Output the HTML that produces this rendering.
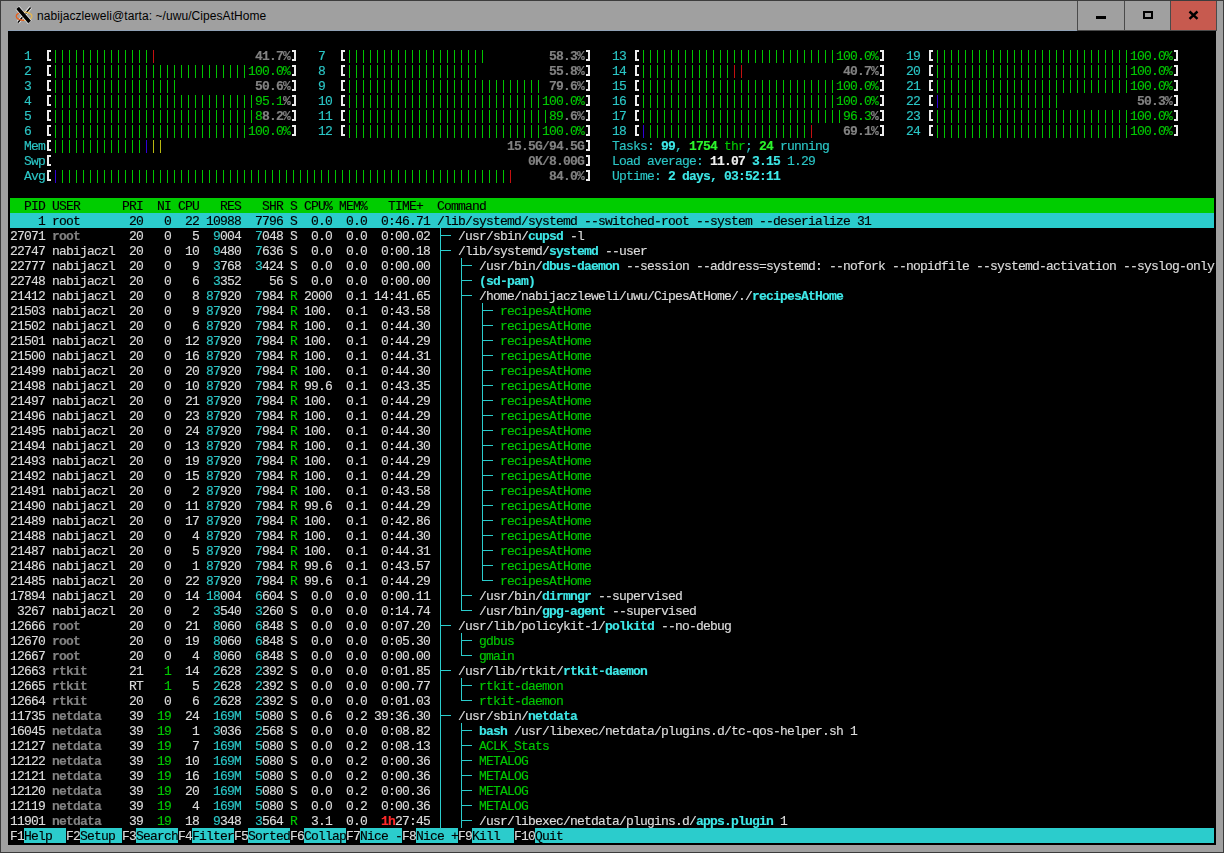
<!DOCTYPE html><html><head><meta charset="utf-8"><style>
html,body{margin:0;padding:0;width:1224px;height:853px;overflow:hidden;background:#a0a0a0;}
#frame{position:absolute;left:0;top:0;width:1222px;height:851px;border:1px solid #3c3c3c;background:#a0a0a0;}
#title{position:absolute;left:37px;top:8px;font-family:"Liberation Sans",sans-serif;font-size:12px;letter-spacing:0.07px;color:#000;white-space:pre;line-height:16px;}
#term{position:absolute;left:8px;top:31px;width:1208px;height:814px;background:#000;}
#tline{position:absolute;left:8px;top:30px;width:1069px;height:1px;background:#8fa0b4;}
.btn{position:absolute;top:1px;height:29px;background:#a0a0a0;}
.t{position:absolute;font-family:"Liberation Mono",monospace;font-size:13px;letter-spacing:-0.80126953125px;-webkit-text-stroke:0.15px currentColor;white-space:pre;line-height:15px;height:15px;}
.bg{position:absolute;height:15px;}
.ln{position:absolute;background:#2bcccc;}
.bar{position:absolute;height:13px;background:repeating-linear-gradient(90deg,transparent 0,transparent 3px,currentColor 3px,currentColor 4px,transparent 4px,transparent 7px);}
</style></head><body><div id="frame"></div>

<div id="tline"></div><div id="term"></div>
<div style="position:absolute;left:1077px;top:30px;width:139px;height:1px;background:#4a4a4a"></div>
<div style="position:absolute;left:1077px;top:1px;width:1px;height:30px;background:#4a4a4a"></div>
<div style="position:absolute;left:1124px;top:1px;width:1px;height:30px;background:#4a4a4a"></div>
<div style="position:absolute;left:1170px;top:1px;width:1px;height:30px;background:#4a4a4a"></div>
<div style="position:absolute;left:1216px;top:1px;width:1px;height:30px;background:#4a4a4a"></div>
<div style="position:absolute;left:1171px;top:1px;width:45px;height:29px;background:#c75a4f"></div>
<div style="position:absolute;left:1096px;top:16px;width:10px;height:3px;background:#000"></div>
<div style="position:absolute;left:1143px;top:11px;width:6px;height:4px;border:2px solid #000"></div>
<svg style="position:absolute;left:1187px;top:9px" width="13" height="12" viewBox="0 0 13 12"><path d="M2.5 2.5 L10.5 9.8 M10.5 2.5 L2.5 9.8" stroke="#000" stroke-width="2.4"/></svg>
<svg style="position:absolute;left:12px;top:4px" width="24" height="24" viewBox="0 0 24 24">

<path d="M18.6 3.4 L6 18.4" stroke="#fff" stroke-width="3.2" stroke-opacity="0.85"/>
<path d="M18.6 3.4 L6 18.4" stroke="#000" stroke-width="1.5"/>
<path d="M12.1 8.2 A7.9 4.1 0 0 0 12.1 16.4" fill="none" stroke="#e8601e" stroke-width="1.3"/><path d="M12.1 16.4 A7.9 4.1 0 0 0 12.1 8.2" fill="none" stroke="#e8b84e" stroke-width="1.2"/>
<path d="M5.4 3.6 L17.8 18.2" stroke="#fff" stroke-width="5.2" stroke-opacity="0.7"/>
<path d="M5.6 3.8 L17.6 18.0" stroke="#000" stroke-width="3.6"/>
</svg>
<div id="title">nabijaczleweli@tarta: ~/uwu/CipesAtHome</div>
<div class="bg" style="left:10px;top:198px;width:1204px;background:#00cd00"></div>
<div class="bg" style="left:10px;top:213px;width:1204px;background:#2bcccc"></div>
<div class="bg" style="left:535px;top:828px;width:679px;background:#2bcccc"></div>
<div class="bg" style="left:24px;top:828px;width:42px;background:#2bcccc"></div>
<div class="bg" style="left:80px;top:828px;width:42px;background:#2bcccc"></div>
<div class="bg" style="left:136px;top:828px;width:42px;background:#2bcccc"></div>
<div class="bg" style="left:192px;top:828px;width:42px;background:#2bcccc"></div>
<div class="bg" style="left:248px;top:828px;width:42px;background:#2bcccc"></div>
<div class="bg" style="left:304px;top:828px;width:42px;background:#2bcccc"></div>
<div class="bg" style="left:360px;top:828px;width:42px;background:#2bcccc"></div>
<div class="bg" style="left:416px;top:828px;width:42px;background:#2bcccc"></div>
<div class="bg" style="left:472px;top:828px;width:42px;background:#2bcccc"></div>
<div style="position:absolute;left:47px;top:50px;width:2px;height:7px;border:2px solid #ececec;border-right:0"></div>
<div style="position:absolute;left:292px;top:50px;width:2px;height:7px;border:2px solid #ececec;border-left:0"></div>
<div style="position:absolute;left:47px;top:65px;width:2px;height:7px;border:2px solid #ececec;border-right:0"></div>
<div style="position:absolute;left:292px;top:65px;width:2px;height:7px;border:2px solid #ececec;border-left:0"></div>
<div style="position:absolute;left:47px;top:80px;width:2px;height:7px;border:2px solid #ececec;border-right:0"></div>
<div style="position:absolute;left:292px;top:80px;width:2px;height:7px;border:2px solid #ececec;border-left:0"></div>
<div style="position:absolute;left:47px;top:95px;width:2px;height:7px;border:2px solid #ececec;border-right:0"></div>
<div style="position:absolute;left:292px;top:95px;width:2px;height:7px;border:2px solid #ececec;border-left:0"></div>
<div style="position:absolute;left:47px;top:110px;width:2px;height:7px;border:2px solid #ececec;border-right:0"></div>
<div style="position:absolute;left:292px;top:110px;width:2px;height:7px;border:2px solid #ececec;border-left:0"></div>
<div style="position:absolute;left:47px;top:125px;width:2px;height:7px;border:2px solid #ececec;border-right:0"></div>
<div style="position:absolute;left:292px;top:125px;width:2px;height:7px;border:2px solid #ececec;border-left:0"></div>
<div style="position:absolute;left:341px;top:50px;width:2px;height:7px;border:2px solid #ececec;border-right:0"></div>
<div style="position:absolute;left:586px;top:50px;width:2px;height:7px;border:2px solid #ececec;border-left:0"></div>
<div style="position:absolute;left:341px;top:65px;width:2px;height:7px;border:2px solid #ececec;border-right:0"></div>
<div style="position:absolute;left:586px;top:65px;width:2px;height:7px;border:2px solid #ececec;border-left:0"></div>
<div style="position:absolute;left:341px;top:80px;width:2px;height:7px;border:2px solid #ececec;border-right:0"></div>
<div style="position:absolute;left:586px;top:80px;width:2px;height:7px;border:2px solid #ececec;border-left:0"></div>
<div style="position:absolute;left:341px;top:95px;width:2px;height:7px;border:2px solid #ececec;border-right:0"></div>
<div style="position:absolute;left:586px;top:95px;width:2px;height:7px;border:2px solid #ececec;border-left:0"></div>
<div style="position:absolute;left:341px;top:110px;width:2px;height:7px;border:2px solid #ececec;border-right:0"></div>
<div style="position:absolute;left:586px;top:110px;width:2px;height:7px;border:2px solid #ececec;border-left:0"></div>
<div style="position:absolute;left:341px;top:125px;width:2px;height:7px;border:2px solid #ececec;border-right:0"></div>
<div style="position:absolute;left:586px;top:125px;width:2px;height:7px;border:2px solid #ececec;border-left:0"></div>
<div style="position:absolute;left:635px;top:50px;width:2px;height:7px;border:2px solid #ececec;border-right:0"></div>
<div style="position:absolute;left:880px;top:50px;width:2px;height:7px;border:2px solid #ececec;border-left:0"></div>
<div style="position:absolute;left:635px;top:65px;width:2px;height:7px;border:2px solid #ececec;border-right:0"></div>
<div style="position:absolute;left:880px;top:65px;width:2px;height:7px;border:2px solid #ececec;border-left:0"></div>
<div style="position:absolute;left:635px;top:80px;width:2px;height:7px;border:2px solid #ececec;border-right:0"></div>
<div style="position:absolute;left:880px;top:80px;width:2px;height:7px;border:2px solid #ececec;border-left:0"></div>
<div style="position:absolute;left:635px;top:95px;width:2px;height:7px;border:2px solid #ececec;border-right:0"></div>
<div style="position:absolute;left:880px;top:95px;width:2px;height:7px;border:2px solid #ececec;border-left:0"></div>
<div style="position:absolute;left:635px;top:110px;width:2px;height:7px;border:2px solid #ececec;border-right:0"></div>
<div style="position:absolute;left:880px;top:110px;width:2px;height:7px;border:2px solid #ececec;border-left:0"></div>
<div style="position:absolute;left:635px;top:125px;width:2px;height:7px;border:2px solid #ececec;border-right:0"></div>
<div style="position:absolute;left:880px;top:125px;width:2px;height:7px;border:2px solid #ececec;border-left:0"></div>
<div style="position:absolute;left:929px;top:50px;width:2px;height:7px;border:2px solid #ececec;border-right:0"></div>
<div style="position:absolute;left:1174px;top:50px;width:2px;height:7px;border:2px solid #ececec;border-left:0"></div>
<div style="position:absolute;left:929px;top:65px;width:2px;height:7px;border:2px solid #ececec;border-right:0"></div>
<div style="position:absolute;left:1174px;top:65px;width:2px;height:7px;border:2px solid #ececec;border-left:0"></div>
<div style="position:absolute;left:929px;top:80px;width:2px;height:7px;border:2px solid #ececec;border-right:0"></div>
<div style="position:absolute;left:1174px;top:80px;width:2px;height:7px;border:2px solid #ececec;border-left:0"></div>
<div style="position:absolute;left:929px;top:95px;width:2px;height:7px;border:2px solid #ececec;border-right:0"></div>
<div style="position:absolute;left:1174px;top:95px;width:2px;height:7px;border:2px solid #ececec;border-left:0"></div>
<div style="position:absolute;left:929px;top:110px;width:2px;height:7px;border:2px solid #ececec;border-right:0"></div>
<div style="position:absolute;left:1174px;top:110px;width:2px;height:7px;border:2px solid #ececec;border-left:0"></div>
<div style="position:absolute;left:929px;top:125px;width:2px;height:7px;border:2px solid #ececec;border-right:0"></div>
<div style="position:absolute;left:1174px;top:125px;width:2px;height:7px;border:2px solid #ececec;border-left:0"></div>
<div style="position:absolute;left:47px;top:140px;width:2px;height:7px;border:2px solid #ececec;border-right:0"></div>
<div style="position:absolute;left:586px;top:140px;width:2px;height:7px;border:2px solid #ececec;border-left:0"></div>
<div style="position:absolute;left:47px;top:155px;width:2px;height:7px;border:2px solid #ececec;border-right:0"></div>
<div style="position:absolute;left:586px;top:155px;width:2px;height:7px;border:2px solid #ececec;border-left:0"></div>
<div style="position:absolute;left:47px;top:170px;width:2px;height:7px;border:2px solid #ececec;border-right:0"></div>
<div style="position:absolute;left:586px;top:170px;width:2px;height:7px;border:2px solid #ececec;border-left:0"></div>
<div class="bar" style="left:52px;top:50px;width:98px;color:#00c400"></div>
<div class="bar" style="left:150px;top:50px;width:7px;color:#c41010"></div>
<div class="bar" style="left:346px;top:50px;width:140px;color:#00c400"></div>
<div class="bar" style="left:640px;top:50px;width:196px;color:#00c400"></div>
<div class="bar" style="left:934px;top:50px;width:196px;color:#00c400"></div>
<div class="bar" style="left:52px;top:65px;width:196px;color:#00c400"></div>
<div class="bar" style="left:346px;top:65px;width:133px;color:#00c400"></div>
<div class="bar" style="left:640px;top:65px;width:91px;color:#00c400"></div>
<div class="bar" style="left:731px;top:65px;width:14px;color:#c41010"></div>
<div class="bar" style="left:934px;top:65px;width:196px;color:#00c400"></div>
<div class="bar" style="left:52px;top:80px;width:126px;color:#00c400"></div>
<div class="bar" style="left:346px;top:80px;width:196px;color:#00c400"></div>
<div class="bar" style="left:640px;top:80px;width:196px;color:#00c400"></div>
<div class="bar" style="left:934px;top:80px;width:196px;color:#00c400"></div>
<div class="bar" style="left:52px;top:95px;width:203px;color:#00c400"></div>
<div class="bar" style="left:346px;top:95px;width:196px;color:#00c400"></div>
<div class="bar" style="left:640px;top:95px;width:196px;color:#00c400"></div>
<div class="bar" style="left:934px;top:95px;width:7px;color:#3000d8"></div>
<div class="bar" style="left:941px;top:95px;width:119px;color:#00c400"></div>
<div class="bar" style="left:52px;top:110px;width:203px;color:#00c400"></div>
<div class="bar" style="left:346px;top:110px;width:203px;color:#00c400"></div>
<div class="bar" style="left:640px;top:110px;width:203px;color:#00c400"></div>
<div class="bar" style="left:934px;top:110px;width:196px;color:#00c400"></div>
<div class="bar" style="left:52px;top:125px;width:196px;color:#00c400"></div>
<div class="bar" style="left:346px;top:125px;width:196px;color:#00c400"></div>
<div class="bar" style="left:640px;top:125px;width:7px;color:#3000d8"></div>
<div class="bar" style="left:647px;top:125px;width:161px;color:#00c400"></div>
<div class="bar" style="left:808px;top:125px;width:7px;color:#c41010"></div>
<div class="bar" style="left:934px;top:125px;width:196px;color:#00c400"></div>
<div class="bar" style="left:52px;top:140px;width:91px;color:#00c400"></div>
<div class="bar" style="left:143px;top:140px;width:7px;color:#3000d8"></div>
<div class="bar" style="left:150px;top:140px;width:14px;color:#b8b810"></div>
<div class="bar" style="left:52px;top:170px;width:7px;color:#3000d8"></div>
<div class="bar" style="left:59px;top:170px;width:448px;color:#00c400"></div>
<div class="bar" style="left:507px;top:170px;width:7px;color:#c41010"></div>
<div class="ln" style="left:440px;top:228px;width:1px;height:15px"></div>
<div class="ln" style="left:440px;top:235px;width:11px;height:1px"></div>
<div class="ln" style="left:440px;top:243px;width:1px;height:15px"></div>
<div class="ln" style="left:440px;top:250px;width:11px;height:1px"></div>
<div class="ln" style="left:440px;top:258px;width:1px;height:15px"></div>
<div class="ln" style="left:461px;top:258px;width:1px;height:15px"></div>
<div class="ln" style="left:461px;top:265px;width:11px;height:1px"></div>
<div class="ln" style="left:440px;top:273px;width:1px;height:15px"></div>
<div class="ln" style="left:461px;top:273px;width:1px;height:15px"></div>
<div class="ln" style="left:461px;top:280px;width:11px;height:1px"></div>
<div class="ln" style="left:440px;top:288px;width:1px;height:15px"></div>
<div class="ln" style="left:461px;top:288px;width:1px;height:15px"></div>
<div class="ln" style="left:461px;top:295px;width:11px;height:1px"></div>
<div class="ln" style="left:440px;top:303px;width:1px;height:15px"></div>
<div class="ln" style="left:461px;top:303px;width:1px;height:15px"></div>
<div class="ln" style="left:482px;top:303px;width:1px;height:15px"></div>
<div class="ln" style="left:482px;top:310px;width:11px;height:1px"></div>
<div class="ln" style="left:440px;top:318px;width:1px;height:15px"></div>
<div class="ln" style="left:461px;top:318px;width:1px;height:15px"></div>
<div class="ln" style="left:482px;top:318px;width:1px;height:15px"></div>
<div class="ln" style="left:482px;top:325px;width:11px;height:1px"></div>
<div class="ln" style="left:440px;top:333px;width:1px;height:15px"></div>
<div class="ln" style="left:461px;top:333px;width:1px;height:15px"></div>
<div class="ln" style="left:482px;top:333px;width:1px;height:15px"></div>
<div class="ln" style="left:482px;top:340px;width:11px;height:1px"></div>
<div class="ln" style="left:440px;top:348px;width:1px;height:15px"></div>
<div class="ln" style="left:461px;top:348px;width:1px;height:15px"></div>
<div class="ln" style="left:482px;top:348px;width:1px;height:15px"></div>
<div class="ln" style="left:482px;top:355px;width:11px;height:1px"></div>
<div class="ln" style="left:440px;top:363px;width:1px;height:15px"></div>
<div class="ln" style="left:461px;top:363px;width:1px;height:15px"></div>
<div class="ln" style="left:482px;top:363px;width:1px;height:15px"></div>
<div class="ln" style="left:482px;top:370px;width:11px;height:1px"></div>
<div class="ln" style="left:440px;top:378px;width:1px;height:15px"></div>
<div class="ln" style="left:461px;top:378px;width:1px;height:15px"></div>
<div class="ln" style="left:482px;top:378px;width:1px;height:15px"></div>
<div class="ln" style="left:482px;top:385px;width:11px;height:1px"></div>
<div class="ln" style="left:440px;top:393px;width:1px;height:15px"></div>
<div class="ln" style="left:461px;top:393px;width:1px;height:15px"></div>
<div class="ln" style="left:482px;top:393px;width:1px;height:15px"></div>
<div class="ln" style="left:482px;top:400px;width:11px;height:1px"></div>
<div class="ln" style="left:440px;top:408px;width:1px;height:15px"></div>
<div class="ln" style="left:461px;top:408px;width:1px;height:15px"></div>
<div class="ln" style="left:482px;top:408px;width:1px;height:15px"></div>
<div class="ln" style="left:482px;top:415px;width:11px;height:1px"></div>
<div class="ln" style="left:440px;top:423px;width:1px;height:15px"></div>
<div class="ln" style="left:461px;top:423px;width:1px;height:15px"></div>
<div class="ln" style="left:482px;top:423px;width:1px;height:15px"></div>
<div class="ln" style="left:482px;top:430px;width:11px;height:1px"></div>
<div class="ln" style="left:440px;top:438px;width:1px;height:15px"></div>
<div class="ln" style="left:461px;top:438px;width:1px;height:15px"></div>
<div class="ln" style="left:482px;top:438px;width:1px;height:15px"></div>
<div class="ln" style="left:482px;top:445px;width:11px;height:1px"></div>
<div class="ln" style="left:440px;top:453px;width:1px;height:15px"></div>
<div class="ln" style="left:461px;top:453px;width:1px;height:15px"></div>
<div class="ln" style="left:482px;top:453px;width:1px;height:15px"></div>
<div class="ln" style="left:482px;top:460px;width:11px;height:1px"></div>
<div class="ln" style="left:440px;top:468px;width:1px;height:15px"></div>
<div class="ln" style="left:461px;top:468px;width:1px;height:15px"></div>
<div class="ln" style="left:482px;top:468px;width:1px;height:15px"></div>
<div class="ln" style="left:482px;top:475px;width:11px;height:1px"></div>
<div class="ln" style="left:440px;top:483px;width:1px;height:15px"></div>
<div class="ln" style="left:461px;top:483px;width:1px;height:15px"></div>
<div class="ln" style="left:482px;top:483px;width:1px;height:15px"></div>
<div class="ln" style="left:482px;top:490px;width:11px;height:1px"></div>
<div class="ln" style="left:440px;top:498px;width:1px;height:15px"></div>
<div class="ln" style="left:461px;top:498px;width:1px;height:15px"></div>
<div class="ln" style="left:482px;top:498px;width:1px;height:15px"></div>
<div class="ln" style="left:482px;top:505px;width:11px;height:1px"></div>
<div class="ln" style="left:440px;top:513px;width:1px;height:15px"></div>
<div class="ln" style="left:461px;top:513px;width:1px;height:15px"></div>
<div class="ln" style="left:482px;top:513px;width:1px;height:15px"></div>
<div class="ln" style="left:482px;top:520px;width:11px;height:1px"></div>
<div class="ln" style="left:440px;top:528px;width:1px;height:15px"></div>
<div class="ln" style="left:461px;top:528px;width:1px;height:15px"></div>
<div class="ln" style="left:482px;top:528px;width:1px;height:15px"></div>
<div class="ln" style="left:482px;top:535px;width:11px;height:1px"></div>
<div class="ln" style="left:440px;top:543px;width:1px;height:15px"></div>
<div class="ln" style="left:461px;top:543px;width:1px;height:15px"></div>
<div class="ln" style="left:482px;top:543px;width:1px;height:15px"></div>
<div class="ln" style="left:482px;top:550px;width:11px;height:1px"></div>
<div class="ln" style="left:440px;top:558px;width:1px;height:15px"></div>
<div class="ln" style="left:461px;top:558px;width:1px;height:15px"></div>
<div class="ln" style="left:482px;top:558px;width:1px;height:15px"></div>
<div class="ln" style="left:482px;top:565px;width:11px;height:1px"></div>
<div class="ln" style="left:440px;top:573px;width:1px;height:15px"></div>
<div class="ln" style="left:461px;top:573px;width:1px;height:15px"></div>
<div class="ln" style="left:482px;top:573px;width:1px;height:8px"></div>
<div class="ln" style="left:482px;top:580px;width:11px;height:1px"></div>
<div class="ln" style="left:440px;top:588px;width:1px;height:15px"></div>
<div class="ln" style="left:461px;top:588px;width:1px;height:15px"></div>
<div class="ln" style="left:461px;top:595px;width:11px;height:1px"></div>
<div class="ln" style="left:440px;top:603px;width:1px;height:15px"></div>
<div class="ln" style="left:461px;top:603px;width:1px;height:8px"></div>
<div class="ln" style="left:461px;top:610px;width:11px;height:1px"></div>
<div class="ln" style="left:440px;top:618px;width:1px;height:15px"></div>
<div class="ln" style="left:440px;top:625px;width:11px;height:1px"></div>
<div class="ln" style="left:440px;top:633px;width:1px;height:15px"></div>
<div class="ln" style="left:461px;top:633px;width:1px;height:15px"></div>
<div class="ln" style="left:461px;top:640px;width:11px;height:1px"></div>
<div class="ln" style="left:440px;top:648px;width:1px;height:15px"></div>
<div class="ln" style="left:461px;top:648px;width:1px;height:8px"></div>
<div class="ln" style="left:461px;top:655px;width:11px;height:1px"></div>
<div class="ln" style="left:440px;top:663px;width:1px;height:15px"></div>
<div class="ln" style="left:440px;top:670px;width:11px;height:1px"></div>
<div class="ln" style="left:440px;top:678px;width:1px;height:15px"></div>
<div class="ln" style="left:461px;top:678px;width:1px;height:15px"></div>
<div class="ln" style="left:461px;top:685px;width:11px;height:1px"></div>
<div class="ln" style="left:440px;top:693px;width:1px;height:15px"></div>
<div class="ln" style="left:461px;top:693px;width:1px;height:8px"></div>
<div class="ln" style="left:461px;top:700px;width:11px;height:1px"></div>
<div class="ln" style="left:440px;top:708px;width:1px;height:15px"></div>
<div class="ln" style="left:440px;top:715px;width:11px;height:1px"></div>
<div class="ln" style="left:440px;top:723px;width:1px;height:15px"></div>
<div class="ln" style="left:461px;top:723px;width:1px;height:15px"></div>
<div class="ln" style="left:461px;top:730px;width:11px;height:1px"></div>
<div class="ln" style="left:440px;top:738px;width:1px;height:15px"></div>
<div class="ln" style="left:461px;top:738px;width:1px;height:15px"></div>
<div class="ln" style="left:461px;top:745px;width:11px;height:1px"></div>
<div class="ln" style="left:440px;top:753px;width:1px;height:15px"></div>
<div class="ln" style="left:461px;top:753px;width:1px;height:15px"></div>
<div class="ln" style="left:461px;top:760px;width:11px;height:1px"></div>
<div class="ln" style="left:440px;top:768px;width:1px;height:15px"></div>
<div class="ln" style="left:461px;top:768px;width:1px;height:15px"></div>
<div class="ln" style="left:461px;top:775px;width:11px;height:1px"></div>
<div class="ln" style="left:440px;top:783px;width:1px;height:15px"></div>
<div class="ln" style="left:461px;top:783px;width:1px;height:15px"></div>
<div class="ln" style="left:461px;top:790px;width:11px;height:1px"></div>
<div class="ln" style="left:440px;top:798px;width:1px;height:15px"></div>
<div class="ln" style="left:461px;top:798px;width:1px;height:15px"></div>
<div class="ln" style="left:461px;top:805px;width:11px;height:1px"></div>
<div class="ln" style="left:440px;top:813px;width:1px;height:15px"></div>
<div class="ln" style="left:461px;top:813px;width:1px;height:15px"></div>
<div class="ln" style="left:461px;top:820px;width:11px;height:1px"></div>
<div style="position:absolute;left:0;top:0;width:1224px;height:853px;will-change:transform">
<div class="t" style="left:24px;top:49px;color:#2bc6c6">1</div>
<div class="t" style="left:255px;top:49px;color:#828282;font-weight:bold">41.7%</div>
<div class="t" style="left:318px;top:49px;color:#2bc6c6">7</div>
<div class="t" style="left:549px;top:49px;color:#828282;font-weight:bold">58.3%</div>
<div class="t" style="left:612px;top:49px;color:#2bc6c6">13</div>
<div class="t" style="left:836px;top:49px;color:#00c800">100.0%</div>
<div class="t" style="left:906px;top:49px;color:#2bc6c6">19</div>
<div class="t" style="left:1130px;top:49px;color:#00c800">100.0%</div>
<div class="t" style="left:24px;top:64px;color:#2bc6c6">2</div>
<div class="t" style="left:248px;top:64px;color:#00c800">100.0%</div>
<div class="t" style="left:318px;top:64px;color:#2bc6c6">8</div>
<div class="t" style="left:549px;top:64px;color:#828282;font-weight:bold">55.8%</div>
<div class="t" style="left:612px;top:64px;color:#2bc6c6">14</div>
<div class="t" style="left:843px;top:64px;color:#828282;font-weight:bold">40.7%</div>
<div class="t" style="left:906px;top:64px;color:#2bc6c6">20</div>
<div class="t" style="left:1130px;top:64px;color:#00c800">100.0%</div>
<div class="t" style="left:24px;top:79px;color:#2bc6c6">3</div>
<div class="t" style="left:255px;top:79px;color:#828282;font-weight:bold">50.6%</div>
<div class="t" style="left:318px;top:79px;color:#2bc6c6">9</div>
<div class="t" style="left:549px;top:79px;color:#828282;font-weight:bold">79.6%</div>
<div class="t" style="left:612px;top:79px;color:#2bc6c6">15</div>
<div class="t" style="left:836px;top:79px;color:#00c800">100.0%</div>
<div class="t" style="left:906px;top:79px;color:#2bc6c6">21</div>
<div class="t" style="left:1130px;top:79px;color:#00c800">100.0%</div>
<div class="t" style="left:24px;top:94px;color:#2bc6c6">4</div>
<div class="t" style="left:255px;top:94px;color:#00c800">95.1</div>
<div class="t" style="left:283px;top:94px;color:#828282;font-weight:bold">%</div>
<div class="t" style="left:318px;top:94px;color:#2bc6c6">10</div>
<div class="t" style="left:542px;top:94px;color:#00c800">100.0%</div>
<div class="t" style="left:612px;top:94px;color:#2bc6c6">16</div>
<div class="t" style="left:836px;top:94px;color:#00c800">100.0%</div>
<div class="t" style="left:906px;top:94px;color:#2bc6c6">22</div>
<div class="t" style="left:1137px;top:94px;color:#828282;font-weight:bold">50.3%</div>
<div class="t" style="left:24px;top:109px;color:#2bc6c6">5</div>
<div class="t" style="left:255px;top:109px;color:#00c800">8</div>
<div class="t" style="left:262px;top:109px;color:#828282;font-weight:bold">8.2%</div>
<div class="t" style="left:318px;top:109px;color:#2bc6c6">11</div>
<div class="t" style="left:549px;top:109px;color:#00c800">89</div>
<div class="t" style="left:563px;top:109px;color:#828282;font-weight:bold">.6%</div>
<div class="t" style="left:612px;top:109px;color:#2bc6c6">17</div>
<div class="t" style="left:843px;top:109px;color:#00c800">96.3</div>
<div class="t" style="left:871px;top:109px;color:#828282;font-weight:bold">%</div>
<div class="t" style="left:906px;top:109px;color:#2bc6c6">23</div>
<div class="t" style="left:1130px;top:109px;color:#00c800">100.0%</div>
<div class="t" style="left:24px;top:124px;color:#2bc6c6">6</div>
<div class="t" style="left:248px;top:124px;color:#00c800">100.0%</div>
<div class="t" style="left:318px;top:124px;color:#2bc6c6">12</div>
<div class="t" style="left:542px;top:124px;color:#00c800">100.0%</div>
<div class="t" style="left:612px;top:124px;color:#2bc6c6">18</div>
<div class="t" style="left:843px;top:124px;color:#828282;font-weight:bold">69.1%</div>
<div class="t" style="left:906px;top:124px;color:#2bc6c6">24</div>
<div class="t" style="left:1130px;top:124px;color:#00c800">100.0%</div>
<div class="t" style="left:24px;top:139px;color:#2bc6c6">Mem</div>
<div class="t" style="left:507px;top:139px;color:#828282;font-weight:bold">15.5G/94.5G</div>
<div class="t" style="left:612px;top:139px;color:#2bc6c6">Tasks:</div>
<div class="t" style="left:661px;top:139px;color:#3ee8e8;font-weight:bold">99</div>
<div class="t" style="left:675px;top:139px;color:#2bc6c6">,</div>
<div class="t" style="left:689px;top:139px;color:#2cf52c;font-weight:bold">1754</div>
<div class="t" style="left:724px;top:139px;color:#00c800">thr</div>
<div class="t" style="left:745px;top:139px;color:#2bc6c6">;</div>
<div class="t" style="left:759px;top:139px;color:#2cf52c;font-weight:bold">24</div>
<div class="t" style="left:780px;top:139px;color:#2bc6c6">running</div>
<div class="t" style="left:24px;top:154px;color:#2bc6c6">Swp</div>
<div class="t" style="left:528px;top:154px;color:#828282;font-weight:bold">0K/8.00G</div>
<div class="t" style="left:612px;top:154px;color:#2bc6c6">Load average:</div>
<div class="t" style="left:710px;top:154px;color:#f0f0f0;font-weight:bold">11.07</div>
<div class="t" style="left:752px;top:154px;color:#3ee8e8;font-weight:bold">3.15</div>
<div class="t" style="left:787px;top:154px;color:#2bc6c6">1.29</div>
<div class="t" style="left:24px;top:169px;color:#2bc6c6">Avg</div>
<div class="t" style="left:549px;top:169px;color:#828282;font-weight:bold">84.0%</div>
<div class="t" style="left:612px;top:169px;color:#2bc6c6">Uptime:</div>
<div class="t" style="left:668px;top:169px;color:#3ee8e8;font-weight:bold">2 days, 03:52:11</div>
<div class="t" style="left:24px;top:199px;color:#000">PID USER</div>
<div class="t" style="left:122px;top:199px;color:#000">PRI</div>
<div class="t" style="left:157px;top:199px;color:#000">NI CPU</div>
<div class="t" style="left:220px;top:199px;color:#000">RES</div>
<div class="t" style="left:262px;top:199px;color:#000">SHR S CPU% MEM%</div>
<div class="t" style="left:388px;top:199px;color:#000">TIME+</div>
<div class="t" style="left:437px;top:199px;color:#000">Command</div>
<div class="t" style="left:38px;top:214px;color:#000">1 root</div>
<div class="t" style="left:129px;top:214px;color:#000">20</div>
<div class="t" style="left:164px;top:214px;color:#000">0</div>
<div class="t" style="left:185px;top:214px;color:#000">22 10988</div>
<div class="t" style="left:255px;top:214px;color:#000">7796 S</div>
<div class="t" style="left:311px;top:214px;color:#000">0.0</div>
<div class="t" style="left:346px;top:214px;color:#000">0.0</div>
<div class="t" style="left:381px;top:214px;color:#000">0:46.71 /lib/systemd/systemd --switched-root --system --deserialize 31</div>
<div class="t" style="left:10px;top:229px;color:#dcdcdc">27071</div>
<div class="t" style="left:52px;top:229px;color:#828282;font-weight:bold">root</div>
<div class="t" style="left:129px;top:229px;color:#dcdcdc">20</div>
<div class="t" style="left:164px;top:229px;color:#dcdcdc">0</div>
<div class="t" style="left:192px;top:229px;color:#dcdcdc">5</div>
<div class="t" style="left:213px;top:229px;color:#2bc6c6">9</div>
<div class="t" style="left:220px;top:229px;color:#dcdcdc">004</div>
<div class="t" style="left:255px;top:229px;color:#2bc6c6">7</div>
<div class="t" style="left:262px;top:229px;color:#dcdcdc">048 S</div>
<div class="t" style="left:311px;top:229px;color:#dcdcdc">0.0</div>
<div class="t" style="left:346px;top:229px;color:#dcdcdc">0.0</div>
<div class="t" style="left:381px;top:229px;color:#dcdcdc">0:00.02</div>
<div class="t" style="left:458px;top:229px;color:#dcdcdc">/usr/sbin/</div>
<div class="t" style="left:528px;top:229px;color:#3ee8e8;font-weight:bold">cupsd</div>
<div class="t" style="left:570px;top:229px;color:#dcdcdc">-l</div>
<div class="t" style="left:10px;top:244px;color:#dcdcdc">22747 nabijaczl</div>
<div class="t" style="left:129px;top:244px;color:#dcdcdc">20</div>
<div class="t" style="left:164px;top:244px;color:#dcdcdc">0</div>
<div class="t" style="left:185px;top:244px;color:#dcdcdc">10</div>
<div class="t" style="left:213px;top:244px;color:#2bc6c6">9</div>
<div class="t" style="left:220px;top:244px;color:#dcdcdc">480</div>
<div class="t" style="left:255px;top:244px;color:#2bc6c6">7</div>
<div class="t" style="left:262px;top:244px;color:#dcdcdc">636 S</div>
<div class="t" style="left:311px;top:244px;color:#dcdcdc">0.0</div>
<div class="t" style="left:346px;top:244px;color:#dcdcdc">0.0</div>
<div class="t" style="left:381px;top:244px;color:#dcdcdc">0:00.18</div>
<div class="t" style="left:458px;top:244px;color:#dcdcdc">/lib/systemd/</div>
<div class="t" style="left:549px;top:244px;color:#3ee8e8;font-weight:bold">systemd</div>
<div class="t" style="left:605px;top:244px;color:#dcdcdc">--user</div>
<div class="t" style="left:10px;top:259px;color:#dcdcdc">22777 nabijaczl</div>
<div class="t" style="left:129px;top:259px;color:#dcdcdc">20</div>
<div class="t" style="left:164px;top:259px;color:#dcdcdc">0</div>
<div class="t" style="left:192px;top:259px;color:#dcdcdc">9</div>
<div class="t" style="left:213px;top:259px;color:#2bc6c6">3</div>
<div class="t" style="left:220px;top:259px;color:#dcdcdc">768</div>
<div class="t" style="left:255px;top:259px;color:#2bc6c6">3</div>
<div class="t" style="left:262px;top:259px;color:#dcdcdc">424 S</div>
<div class="t" style="left:311px;top:259px;color:#dcdcdc">0.0</div>
<div class="t" style="left:346px;top:259px;color:#dcdcdc">0.0</div>
<div class="t" style="left:381px;top:259px;color:#dcdcdc">0:00.00</div>
<div class="t" style="left:479px;top:259px;color:#dcdcdc">/usr/bin/</div>
<div class="t" style="left:542px;top:259px;color:#3ee8e8;font-weight:bold">dbus-daemon</div>
<div class="t" style="left:626px;top:259px;color:#dcdcdc">--session --address=systemd: --nofork --nopidfile --systemd-activation --syslog-only</div>
<div class="t" style="left:10px;top:274px;color:#dcdcdc">22748 nabijaczl</div>
<div class="t" style="left:129px;top:274px;color:#dcdcdc">20</div>
<div class="t" style="left:164px;top:274px;color:#dcdcdc">0</div>
<div class="t" style="left:192px;top:274px;color:#dcdcdc">6</div>
<div class="t" style="left:213px;top:274px;color:#2bc6c6">3</div>
<div class="t" style="left:220px;top:274px;color:#dcdcdc">352</div>
<div class="t" style="left:269px;top:274px;color:#dcdcdc">56 S</div>
<div class="t" style="left:311px;top:274px;color:#dcdcdc">0.0</div>
<div class="t" style="left:346px;top:274px;color:#dcdcdc">0.0</div>
<div class="t" style="left:381px;top:274px;color:#dcdcdc">0:00.00</div>
<div class="t" style="left:479px;top:274px;color:#3ee8e8;font-weight:bold">(sd-pam)</div>
<div class="t" style="left:10px;top:289px;color:#dcdcdc">21412 nabijaczl</div>
<div class="t" style="left:129px;top:289px;color:#dcdcdc">20</div>
<div class="t" style="left:164px;top:289px;color:#dcdcdc">0</div>
<div class="t" style="left:192px;top:289px;color:#dcdcdc">8</div>
<div class="t" style="left:206px;top:289px;color:#2bc6c6">87</div>
<div class="t" style="left:220px;top:289px;color:#dcdcdc">920</div>
<div class="t" style="left:255px;top:289px;color:#2bc6c6">7</div>
<div class="t" style="left:262px;top:289px;color:#dcdcdc">984</div>
<div class="t" style="left:290px;top:289px;color:#00c800">R</div>
<div class="t" style="left:304px;top:289px;color:#dcdcdc">2000</div>
<div class="t" style="left:346px;top:289px;color:#dcdcdc">0.1 14:41.65</div>
<div class="t" style="left:479px;top:289px;color:#dcdcdc">/home/nabijaczleweli/uwu/CipesAtHome/./</div>
<div class="t" style="left:752px;top:289px;color:#3ee8e8;font-weight:bold">recipesAtHome</div>
<div class="t" style="left:10px;top:304px;color:#dcdcdc">21503 nabijaczl</div>
<div class="t" style="left:129px;top:304px;color:#dcdcdc">20</div>
<div class="t" style="left:164px;top:304px;color:#dcdcdc">0</div>
<div class="t" style="left:192px;top:304px;color:#dcdcdc">9</div>
<div class="t" style="left:206px;top:304px;color:#2bc6c6">87</div>
<div class="t" style="left:220px;top:304px;color:#dcdcdc">920</div>
<div class="t" style="left:255px;top:304px;color:#2bc6c6">7</div>
<div class="t" style="left:262px;top:304px;color:#dcdcdc">984</div>
<div class="t" style="left:290px;top:304px;color:#00c800">R</div>
<div class="t" style="left:304px;top:304px;color:#dcdcdc">100.</div>
<div class="t" style="left:346px;top:304px;color:#dcdcdc">0.1</div>
<div class="t" style="left:381px;top:304px;color:#dcdcdc">0:43.58</div>
<div class="t" style="left:500px;top:304px;color:#00c800">recipesAtHome</div>
<div class="t" style="left:10px;top:319px;color:#dcdcdc">21502 nabijaczl</div>
<div class="t" style="left:129px;top:319px;color:#dcdcdc">20</div>
<div class="t" style="left:164px;top:319px;color:#dcdcdc">0</div>
<div class="t" style="left:192px;top:319px;color:#dcdcdc">6</div>
<div class="t" style="left:206px;top:319px;color:#2bc6c6">87</div>
<div class="t" style="left:220px;top:319px;color:#dcdcdc">920</div>
<div class="t" style="left:255px;top:319px;color:#2bc6c6">7</div>
<div class="t" style="left:262px;top:319px;color:#dcdcdc">984</div>
<div class="t" style="left:290px;top:319px;color:#00c800">R</div>
<div class="t" style="left:304px;top:319px;color:#dcdcdc">100.</div>
<div class="t" style="left:346px;top:319px;color:#dcdcdc">0.1</div>
<div class="t" style="left:381px;top:319px;color:#dcdcdc">0:44.30</div>
<div class="t" style="left:500px;top:319px;color:#00c800">recipesAtHome</div>
<div class="t" style="left:10px;top:334px;color:#dcdcdc">21501 nabijaczl</div>
<div class="t" style="left:129px;top:334px;color:#dcdcdc">20</div>
<div class="t" style="left:164px;top:334px;color:#dcdcdc">0</div>
<div class="t" style="left:185px;top:334px;color:#dcdcdc">12</div>
<div class="t" style="left:206px;top:334px;color:#2bc6c6">87</div>
<div class="t" style="left:220px;top:334px;color:#dcdcdc">920</div>
<div class="t" style="left:255px;top:334px;color:#2bc6c6">7</div>
<div class="t" style="left:262px;top:334px;color:#dcdcdc">984</div>
<div class="t" style="left:290px;top:334px;color:#00c800">R</div>
<div class="t" style="left:304px;top:334px;color:#dcdcdc">100.</div>
<div class="t" style="left:346px;top:334px;color:#dcdcdc">0.1</div>
<div class="t" style="left:381px;top:334px;color:#dcdcdc">0:44.29</div>
<div class="t" style="left:500px;top:334px;color:#00c800">recipesAtHome</div>
<div class="t" style="left:10px;top:349px;color:#dcdcdc">21500 nabijaczl</div>
<div class="t" style="left:129px;top:349px;color:#dcdcdc">20</div>
<div class="t" style="left:164px;top:349px;color:#dcdcdc">0</div>
<div class="t" style="left:185px;top:349px;color:#dcdcdc">16</div>
<div class="t" style="left:206px;top:349px;color:#2bc6c6">87</div>
<div class="t" style="left:220px;top:349px;color:#dcdcdc">920</div>
<div class="t" style="left:255px;top:349px;color:#2bc6c6">7</div>
<div class="t" style="left:262px;top:349px;color:#dcdcdc">984</div>
<div class="t" style="left:290px;top:349px;color:#00c800">R</div>
<div class="t" style="left:304px;top:349px;color:#dcdcdc">100.</div>
<div class="t" style="left:346px;top:349px;color:#dcdcdc">0.1</div>
<div class="t" style="left:381px;top:349px;color:#dcdcdc">0:44.31</div>
<div class="t" style="left:500px;top:349px;color:#00c800">recipesAtHome</div>
<div class="t" style="left:10px;top:364px;color:#dcdcdc">21499 nabijaczl</div>
<div class="t" style="left:129px;top:364px;color:#dcdcdc">20</div>
<div class="t" style="left:164px;top:364px;color:#dcdcdc">0</div>
<div class="t" style="left:185px;top:364px;color:#dcdcdc">20</div>
<div class="t" style="left:206px;top:364px;color:#2bc6c6">87</div>
<div class="t" style="left:220px;top:364px;color:#dcdcdc">920</div>
<div class="t" style="left:255px;top:364px;color:#2bc6c6">7</div>
<div class="t" style="left:262px;top:364px;color:#dcdcdc">984</div>
<div class="t" style="left:290px;top:364px;color:#00c800">R</div>
<div class="t" style="left:304px;top:364px;color:#dcdcdc">100.</div>
<div class="t" style="left:346px;top:364px;color:#dcdcdc">0.1</div>
<div class="t" style="left:381px;top:364px;color:#dcdcdc">0:44.30</div>
<div class="t" style="left:500px;top:364px;color:#00c800">recipesAtHome</div>
<div class="t" style="left:10px;top:379px;color:#dcdcdc">21498 nabijaczl</div>
<div class="t" style="left:129px;top:379px;color:#dcdcdc">20</div>
<div class="t" style="left:164px;top:379px;color:#dcdcdc">0</div>
<div class="t" style="left:185px;top:379px;color:#dcdcdc">10</div>
<div class="t" style="left:206px;top:379px;color:#2bc6c6">87</div>
<div class="t" style="left:220px;top:379px;color:#dcdcdc">920</div>
<div class="t" style="left:255px;top:379px;color:#2bc6c6">7</div>
<div class="t" style="left:262px;top:379px;color:#dcdcdc">984</div>
<div class="t" style="left:290px;top:379px;color:#00c800">R</div>
<div class="t" style="left:304px;top:379px;color:#dcdcdc">99.6</div>
<div class="t" style="left:346px;top:379px;color:#dcdcdc">0.1</div>
<div class="t" style="left:381px;top:379px;color:#dcdcdc">0:43.35</div>
<div class="t" style="left:500px;top:379px;color:#00c800">recipesAtHome</div>
<div class="t" style="left:10px;top:394px;color:#dcdcdc">21497 nabijaczl</div>
<div class="t" style="left:129px;top:394px;color:#dcdcdc">20</div>
<div class="t" style="left:164px;top:394px;color:#dcdcdc">0</div>
<div class="t" style="left:185px;top:394px;color:#dcdcdc">21</div>
<div class="t" style="left:206px;top:394px;color:#2bc6c6">87</div>
<div class="t" style="left:220px;top:394px;color:#dcdcdc">920</div>
<div class="t" style="left:255px;top:394px;color:#2bc6c6">7</div>
<div class="t" style="left:262px;top:394px;color:#dcdcdc">984</div>
<div class="t" style="left:290px;top:394px;color:#00c800">R</div>
<div class="t" style="left:304px;top:394px;color:#dcdcdc">100.</div>
<div class="t" style="left:346px;top:394px;color:#dcdcdc">0.1</div>
<div class="t" style="left:381px;top:394px;color:#dcdcdc">0:44.29</div>
<div class="t" style="left:500px;top:394px;color:#00c800">recipesAtHome</div>
<div class="t" style="left:10px;top:409px;color:#dcdcdc">21496 nabijaczl</div>
<div class="t" style="left:129px;top:409px;color:#dcdcdc">20</div>
<div class="t" style="left:164px;top:409px;color:#dcdcdc">0</div>
<div class="t" style="left:185px;top:409px;color:#dcdcdc">23</div>
<div class="t" style="left:206px;top:409px;color:#2bc6c6">87</div>
<div class="t" style="left:220px;top:409px;color:#dcdcdc">920</div>
<div class="t" style="left:255px;top:409px;color:#2bc6c6">7</div>
<div class="t" style="left:262px;top:409px;color:#dcdcdc">984</div>
<div class="t" style="left:290px;top:409px;color:#00c800">R</div>
<div class="t" style="left:304px;top:409px;color:#dcdcdc">100.</div>
<div class="t" style="left:346px;top:409px;color:#dcdcdc">0.1</div>
<div class="t" style="left:381px;top:409px;color:#dcdcdc">0:44.29</div>
<div class="t" style="left:500px;top:409px;color:#00c800">recipesAtHome</div>
<div class="t" style="left:10px;top:424px;color:#dcdcdc">21495 nabijaczl</div>
<div class="t" style="left:129px;top:424px;color:#dcdcdc">20</div>
<div class="t" style="left:164px;top:424px;color:#dcdcdc">0</div>
<div class="t" style="left:185px;top:424px;color:#dcdcdc">24</div>
<div class="t" style="left:206px;top:424px;color:#2bc6c6">87</div>
<div class="t" style="left:220px;top:424px;color:#dcdcdc">920</div>
<div class="t" style="left:255px;top:424px;color:#2bc6c6">7</div>
<div class="t" style="left:262px;top:424px;color:#dcdcdc">984</div>
<div class="t" style="left:290px;top:424px;color:#00c800">R</div>
<div class="t" style="left:304px;top:424px;color:#dcdcdc">100.</div>
<div class="t" style="left:346px;top:424px;color:#dcdcdc">0.1</div>
<div class="t" style="left:381px;top:424px;color:#dcdcdc">0:44.30</div>
<div class="t" style="left:500px;top:424px;color:#00c800">recipesAtHome</div>
<div class="t" style="left:10px;top:439px;color:#dcdcdc">21494 nabijaczl</div>
<div class="t" style="left:129px;top:439px;color:#dcdcdc">20</div>
<div class="t" style="left:164px;top:439px;color:#dcdcdc">0</div>
<div class="t" style="left:185px;top:439px;color:#dcdcdc">13</div>
<div class="t" style="left:206px;top:439px;color:#2bc6c6">87</div>
<div class="t" style="left:220px;top:439px;color:#dcdcdc">920</div>
<div class="t" style="left:255px;top:439px;color:#2bc6c6">7</div>
<div class="t" style="left:262px;top:439px;color:#dcdcdc">984</div>
<div class="t" style="left:290px;top:439px;color:#00c800">R</div>
<div class="t" style="left:304px;top:439px;color:#dcdcdc">100.</div>
<div class="t" style="left:346px;top:439px;color:#dcdcdc">0.1</div>
<div class="t" style="left:381px;top:439px;color:#dcdcdc">0:44.30</div>
<div class="t" style="left:500px;top:439px;color:#00c800">recipesAtHome</div>
<div class="t" style="left:10px;top:454px;color:#dcdcdc">21493 nabijaczl</div>
<div class="t" style="left:129px;top:454px;color:#dcdcdc">20</div>
<div class="t" style="left:164px;top:454px;color:#dcdcdc">0</div>
<div class="t" style="left:185px;top:454px;color:#dcdcdc">19</div>
<div class="t" style="left:206px;top:454px;color:#2bc6c6">87</div>
<div class="t" style="left:220px;top:454px;color:#dcdcdc">920</div>
<div class="t" style="left:255px;top:454px;color:#2bc6c6">7</div>
<div class="t" style="left:262px;top:454px;color:#dcdcdc">984</div>
<div class="t" style="left:290px;top:454px;color:#00c800">R</div>
<div class="t" style="left:304px;top:454px;color:#dcdcdc">100.</div>
<div class="t" style="left:346px;top:454px;color:#dcdcdc">0.1</div>
<div class="t" style="left:381px;top:454px;color:#dcdcdc">0:44.29</div>
<div class="t" style="left:500px;top:454px;color:#00c800">recipesAtHome</div>
<div class="t" style="left:10px;top:469px;color:#dcdcdc">21492 nabijaczl</div>
<div class="t" style="left:129px;top:469px;color:#dcdcdc">20</div>
<div class="t" style="left:164px;top:469px;color:#dcdcdc">0</div>
<div class="t" style="left:185px;top:469px;color:#dcdcdc">15</div>
<div class="t" style="left:206px;top:469px;color:#2bc6c6">87</div>
<div class="t" style="left:220px;top:469px;color:#dcdcdc">920</div>
<div class="t" style="left:255px;top:469px;color:#2bc6c6">7</div>
<div class="t" style="left:262px;top:469px;color:#dcdcdc">984</div>
<div class="t" style="left:290px;top:469px;color:#00c800">R</div>
<div class="t" style="left:304px;top:469px;color:#dcdcdc">100.</div>
<div class="t" style="left:346px;top:469px;color:#dcdcdc">0.1</div>
<div class="t" style="left:381px;top:469px;color:#dcdcdc">0:44.29</div>
<div class="t" style="left:500px;top:469px;color:#00c800">recipesAtHome</div>
<div class="t" style="left:10px;top:484px;color:#dcdcdc">21491 nabijaczl</div>
<div class="t" style="left:129px;top:484px;color:#dcdcdc">20</div>
<div class="t" style="left:164px;top:484px;color:#dcdcdc">0</div>
<div class="t" style="left:192px;top:484px;color:#dcdcdc">2</div>
<div class="t" style="left:206px;top:484px;color:#2bc6c6">87</div>
<div class="t" style="left:220px;top:484px;color:#dcdcdc">920</div>
<div class="t" style="left:255px;top:484px;color:#2bc6c6">7</div>
<div class="t" style="left:262px;top:484px;color:#dcdcdc">984</div>
<div class="t" style="left:290px;top:484px;color:#00c800">R</div>
<div class="t" style="left:304px;top:484px;color:#dcdcdc">100.</div>
<div class="t" style="left:346px;top:484px;color:#dcdcdc">0.1</div>
<div class="t" style="left:381px;top:484px;color:#dcdcdc">0:43.58</div>
<div class="t" style="left:500px;top:484px;color:#00c800">recipesAtHome</div>
<div class="t" style="left:10px;top:499px;color:#dcdcdc">21490 nabijaczl</div>
<div class="t" style="left:129px;top:499px;color:#dcdcdc">20</div>
<div class="t" style="left:164px;top:499px;color:#dcdcdc">0</div>
<div class="t" style="left:185px;top:499px;color:#dcdcdc">11</div>
<div class="t" style="left:206px;top:499px;color:#2bc6c6">87</div>
<div class="t" style="left:220px;top:499px;color:#dcdcdc">920</div>
<div class="t" style="left:255px;top:499px;color:#2bc6c6">7</div>
<div class="t" style="left:262px;top:499px;color:#dcdcdc">984</div>
<div class="t" style="left:290px;top:499px;color:#00c800">R</div>
<div class="t" style="left:304px;top:499px;color:#dcdcdc">99.6</div>
<div class="t" style="left:346px;top:499px;color:#dcdcdc">0.1</div>
<div class="t" style="left:381px;top:499px;color:#dcdcdc">0:44.29</div>
<div class="t" style="left:500px;top:499px;color:#00c800">recipesAtHome</div>
<div class="t" style="left:10px;top:514px;color:#dcdcdc">21489 nabijaczl</div>
<div class="t" style="left:129px;top:514px;color:#dcdcdc">20</div>
<div class="t" style="left:164px;top:514px;color:#dcdcdc">0</div>
<div class="t" style="left:185px;top:514px;color:#dcdcdc">17</div>
<div class="t" style="left:206px;top:514px;color:#2bc6c6">87</div>
<div class="t" style="left:220px;top:514px;color:#dcdcdc">920</div>
<div class="t" style="left:255px;top:514px;color:#2bc6c6">7</div>
<div class="t" style="left:262px;top:514px;color:#dcdcdc">984</div>
<div class="t" style="left:290px;top:514px;color:#00c800">R</div>
<div class="t" style="left:304px;top:514px;color:#dcdcdc">100.</div>
<div class="t" style="left:346px;top:514px;color:#dcdcdc">0.1</div>
<div class="t" style="left:381px;top:514px;color:#dcdcdc">0:42.86</div>
<div class="t" style="left:500px;top:514px;color:#00c800">recipesAtHome</div>
<div class="t" style="left:10px;top:529px;color:#dcdcdc">21488 nabijaczl</div>
<div class="t" style="left:129px;top:529px;color:#dcdcdc">20</div>
<div class="t" style="left:164px;top:529px;color:#dcdcdc">0</div>
<div class="t" style="left:192px;top:529px;color:#dcdcdc">4</div>
<div class="t" style="left:206px;top:529px;color:#2bc6c6">87</div>
<div class="t" style="left:220px;top:529px;color:#dcdcdc">920</div>
<div class="t" style="left:255px;top:529px;color:#2bc6c6">7</div>
<div class="t" style="left:262px;top:529px;color:#dcdcdc">984</div>
<div class="t" style="left:290px;top:529px;color:#00c800">R</div>
<div class="t" style="left:304px;top:529px;color:#dcdcdc">100.</div>
<div class="t" style="left:346px;top:529px;color:#dcdcdc">0.1</div>
<div class="t" style="left:381px;top:529px;color:#dcdcdc">0:44.30</div>
<div class="t" style="left:500px;top:529px;color:#00c800">recipesAtHome</div>
<div class="t" style="left:10px;top:544px;color:#dcdcdc">21487 nabijaczl</div>
<div class="t" style="left:129px;top:544px;color:#dcdcdc">20</div>
<div class="t" style="left:164px;top:544px;color:#dcdcdc">0</div>
<div class="t" style="left:192px;top:544px;color:#dcdcdc">5</div>
<div class="t" style="left:206px;top:544px;color:#2bc6c6">87</div>
<div class="t" style="left:220px;top:544px;color:#dcdcdc">920</div>
<div class="t" style="left:255px;top:544px;color:#2bc6c6">7</div>
<div class="t" style="left:262px;top:544px;color:#dcdcdc">984</div>
<div class="t" style="left:290px;top:544px;color:#00c800">R</div>
<div class="t" style="left:304px;top:544px;color:#dcdcdc">100.</div>
<div class="t" style="left:346px;top:544px;color:#dcdcdc">0.1</div>
<div class="t" style="left:381px;top:544px;color:#dcdcdc">0:44.31</div>
<div class="t" style="left:500px;top:544px;color:#00c800">recipesAtHome</div>
<div class="t" style="left:10px;top:559px;color:#dcdcdc">21486 nabijaczl</div>
<div class="t" style="left:129px;top:559px;color:#dcdcdc">20</div>
<div class="t" style="left:164px;top:559px;color:#dcdcdc">0</div>
<div class="t" style="left:192px;top:559px;color:#dcdcdc">1</div>
<div class="t" style="left:206px;top:559px;color:#2bc6c6">87</div>
<div class="t" style="left:220px;top:559px;color:#dcdcdc">920</div>
<div class="t" style="left:255px;top:559px;color:#2bc6c6">7</div>
<div class="t" style="left:262px;top:559px;color:#dcdcdc">984</div>
<div class="t" style="left:290px;top:559px;color:#00c800">R</div>
<div class="t" style="left:304px;top:559px;color:#dcdcdc">99.6</div>
<div class="t" style="left:346px;top:559px;color:#dcdcdc">0.1</div>
<div class="t" style="left:381px;top:559px;color:#dcdcdc">0:43.57</div>
<div class="t" style="left:500px;top:559px;color:#00c800">recipesAtHome</div>
<div class="t" style="left:10px;top:574px;color:#dcdcdc">21485 nabijaczl</div>
<div class="t" style="left:129px;top:574px;color:#dcdcdc">20</div>
<div class="t" style="left:164px;top:574px;color:#dcdcdc">0</div>
<div class="t" style="left:185px;top:574px;color:#dcdcdc">22</div>
<div class="t" style="left:206px;top:574px;color:#2bc6c6">87</div>
<div class="t" style="left:220px;top:574px;color:#dcdcdc">920</div>
<div class="t" style="left:255px;top:574px;color:#2bc6c6">7</div>
<div class="t" style="left:262px;top:574px;color:#dcdcdc">984</div>
<div class="t" style="left:290px;top:574px;color:#00c800">R</div>
<div class="t" style="left:304px;top:574px;color:#dcdcdc">99.6</div>
<div class="t" style="left:346px;top:574px;color:#dcdcdc">0.1</div>
<div class="t" style="left:381px;top:574px;color:#dcdcdc">0:44.29</div>
<div class="t" style="left:500px;top:574px;color:#00c800">recipesAtHome</div>
<div class="t" style="left:10px;top:589px;color:#dcdcdc">17894 nabijaczl</div>
<div class="t" style="left:129px;top:589px;color:#dcdcdc">20</div>
<div class="t" style="left:164px;top:589px;color:#dcdcdc">0</div>
<div class="t" style="left:185px;top:589px;color:#dcdcdc">14</div>
<div class="t" style="left:206px;top:589px;color:#2bc6c6">18</div>
<div class="t" style="left:220px;top:589px;color:#dcdcdc">004</div>
<div class="t" style="left:255px;top:589px;color:#2bc6c6">6</div>
<div class="t" style="left:262px;top:589px;color:#dcdcdc">604 S</div>
<div class="t" style="left:311px;top:589px;color:#dcdcdc">0.0</div>
<div class="t" style="left:346px;top:589px;color:#dcdcdc">0.0</div>
<div class="t" style="left:381px;top:589px;color:#dcdcdc">0:00.11</div>
<div class="t" style="left:479px;top:589px;color:#dcdcdc">/usr/bin/</div>
<div class="t" style="left:542px;top:589px;color:#3ee8e8;font-weight:bold">dirmngr</div>
<div class="t" style="left:598px;top:589px;color:#dcdcdc">--supervised</div>
<div class="t" style="left:17px;top:604px;color:#dcdcdc">3267 nabijaczl</div>
<div class="t" style="left:129px;top:604px;color:#dcdcdc">20</div>
<div class="t" style="left:164px;top:604px;color:#dcdcdc">0</div>
<div class="t" style="left:192px;top:604px;color:#dcdcdc">2</div>
<div class="t" style="left:213px;top:604px;color:#2bc6c6">3</div>
<div class="t" style="left:220px;top:604px;color:#dcdcdc">540</div>
<div class="t" style="left:255px;top:604px;color:#2bc6c6">3</div>
<div class="t" style="left:262px;top:604px;color:#dcdcdc">260 S</div>
<div class="t" style="left:311px;top:604px;color:#dcdcdc">0.0</div>
<div class="t" style="left:346px;top:604px;color:#dcdcdc">0.0</div>
<div class="t" style="left:381px;top:604px;color:#dcdcdc">0:14.74</div>
<div class="t" style="left:479px;top:604px;color:#dcdcdc">/usr/bin/</div>
<div class="t" style="left:542px;top:604px;color:#3ee8e8;font-weight:bold">gpg-agent</div>
<div class="t" style="left:612px;top:604px;color:#dcdcdc">--supervised</div>
<div class="t" style="left:10px;top:619px;color:#dcdcdc">12666</div>
<div class="t" style="left:52px;top:619px;color:#828282;font-weight:bold">root</div>
<div class="t" style="left:129px;top:619px;color:#dcdcdc">20</div>
<div class="t" style="left:164px;top:619px;color:#dcdcdc">0</div>
<div class="t" style="left:185px;top:619px;color:#dcdcdc">21</div>
<div class="t" style="left:213px;top:619px;color:#2bc6c6">8</div>
<div class="t" style="left:220px;top:619px;color:#dcdcdc">060</div>
<div class="t" style="left:255px;top:619px;color:#2bc6c6">6</div>
<div class="t" style="left:262px;top:619px;color:#dcdcdc">848 S</div>
<div class="t" style="left:311px;top:619px;color:#dcdcdc">0.0</div>
<div class="t" style="left:346px;top:619px;color:#dcdcdc">0.0</div>
<div class="t" style="left:381px;top:619px;color:#dcdcdc">0:07.20</div>
<div class="t" style="left:458px;top:619px;color:#dcdcdc">/usr/lib/policykit-1/</div>
<div class="t" style="left:605px;top:619px;color:#3ee8e8;font-weight:bold">polkitd</div>
<div class="t" style="left:661px;top:619px;color:#dcdcdc">--no-debug</div>
<div class="t" style="left:10px;top:634px;color:#dcdcdc">12670</div>
<div class="t" style="left:52px;top:634px;color:#828282;font-weight:bold">root</div>
<div class="t" style="left:129px;top:634px;color:#dcdcdc">20</div>
<div class="t" style="left:164px;top:634px;color:#dcdcdc">0</div>
<div class="t" style="left:185px;top:634px;color:#dcdcdc">19</div>
<div class="t" style="left:213px;top:634px;color:#2bc6c6">8</div>
<div class="t" style="left:220px;top:634px;color:#dcdcdc">060</div>
<div class="t" style="left:255px;top:634px;color:#2bc6c6">6</div>
<div class="t" style="left:262px;top:634px;color:#dcdcdc">848 S</div>
<div class="t" style="left:311px;top:634px;color:#dcdcdc">0.0</div>
<div class="t" style="left:346px;top:634px;color:#dcdcdc">0.0</div>
<div class="t" style="left:381px;top:634px;color:#dcdcdc">0:05.30</div>
<div class="t" style="left:479px;top:634px;color:#00c800">gdbus</div>
<div class="t" style="left:10px;top:649px;color:#dcdcdc">12667</div>
<div class="t" style="left:52px;top:649px;color:#828282;font-weight:bold">root</div>
<div class="t" style="left:129px;top:649px;color:#dcdcdc">20</div>
<div class="t" style="left:164px;top:649px;color:#dcdcdc">0</div>
<div class="t" style="left:192px;top:649px;color:#dcdcdc">4</div>
<div class="t" style="left:213px;top:649px;color:#2bc6c6">8</div>
<div class="t" style="left:220px;top:649px;color:#dcdcdc">060</div>
<div class="t" style="left:255px;top:649px;color:#2bc6c6">6</div>
<div class="t" style="left:262px;top:649px;color:#dcdcdc">848 S</div>
<div class="t" style="left:311px;top:649px;color:#dcdcdc">0.0</div>
<div class="t" style="left:346px;top:649px;color:#dcdcdc">0.0</div>
<div class="t" style="left:381px;top:649px;color:#dcdcdc">0:00.00</div>
<div class="t" style="left:479px;top:649px;color:#00c800">gmain</div>
<div class="t" style="left:10px;top:664px;color:#dcdcdc">12663</div>
<div class="t" style="left:52px;top:664px;color:#828282;font-weight:bold">rtkit</div>
<div class="t" style="left:129px;top:664px;color:#dcdcdc">21</div>
<div class="t" style="left:164px;top:664px;color:#00c800">1</div>
<div class="t" style="left:185px;top:664px;color:#dcdcdc">14</div>
<div class="t" style="left:213px;top:664px;color:#2bc6c6">2</div>
<div class="t" style="left:220px;top:664px;color:#dcdcdc">628</div>
<div class="t" style="left:255px;top:664px;color:#2bc6c6">2</div>
<div class="t" style="left:262px;top:664px;color:#dcdcdc">392 S</div>
<div class="t" style="left:311px;top:664px;color:#dcdcdc">0.0</div>
<div class="t" style="left:346px;top:664px;color:#dcdcdc">0.0</div>
<div class="t" style="left:381px;top:664px;color:#dcdcdc">0:01.85</div>
<div class="t" style="left:458px;top:664px;color:#dcdcdc">/usr/lib/rtkit/</div>
<div class="t" style="left:563px;top:664px;color:#3ee8e8;font-weight:bold">rtkit-daemon</div>
<div class="t" style="left:10px;top:679px;color:#dcdcdc">12665</div>
<div class="t" style="left:52px;top:679px;color:#828282;font-weight:bold">rtkit</div>
<div class="t" style="left:129px;top:679px;color:#dcdcdc">RT</div>
<div class="t" style="left:164px;top:679px;color:#00c800">1</div>
<div class="t" style="left:192px;top:679px;color:#dcdcdc">5</div>
<div class="t" style="left:213px;top:679px;color:#2bc6c6">2</div>
<div class="t" style="left:220px;top:679px;color:#dcdcdc">628</div>
<div class="t" style="left:255px;top:679px;color:#2bc6c6">2</div>
<div class="t" style="left:262px;top:679px;color:#dcdcdc">392 S</div>
<div class="t" style="left:311px;top:679px;color:#dcdcdc">0.0</div>
<div class="t" style="left:346px;top:679px;color:#dcdcdc">0.0</div>
<div class="t" style="left:381px;top:679px;color:#dcdcdc">0:00.77</div>
<div class="t" style="left:479px;top:679px;color:#00c800">rtkit-daemon</div>
<div class="t" style="left:10px;top:694px;color:#dcdcdc">12664</div>
<div class="t" style="left:52px;top:694px;color:#828282;font-weight:bold">rtkit</div>
<div class="t" style="left:129px;top:694px;color:#dcdcdc">20</div>
<div class="t" style="left:164px;top:694px;color:#dcdcdc">0</div>
<div class="t" style="left:192px;top:694px;color:#dcdcdc">6</div>
<div class="t" style="left:213px;top:694px;color:#2bc6c6">2</div>
<div class="t" style="left:220px;top:694px;color:#dcdcdc">628</div>
<div class="t" style="left:255px;top:694px;color:#2bc6c6">2</div>
<div class="t" style="left:262px;top:694px;color:#dcdcdc">392 S</div>
<div class="t" style="left:311px;top:694px;color:#dcdcdc">0.0</div>
<div class="t" style="left:346px;top:694px;color:#dcdcdc">0.0</div>
<div class="t" style="left:381px;top:694px;color:#dcdcdc">0:01.03</div>
<div class="t" style="left:479px;top:694px;color:#00c800">rtkit-daemon</div>
<div class="t" style="left:10px;top:709px;color:#dcdcdc">11735</div>
<div class="t" style="left:52px;top:709px;color:#828282;font-weight:bold">netdata</div>
<div class="t" style="left:129px;top:709px;color:#dcdcdc">39</div>
<div class="t" style="left:157px;top:709px;color:#00c800">19</div>
<div class="t" style="left:185px;top:709px;color:#dcdcdc">24</div>
<div class="t" style="left:213px;top:709px;color:#2bc6c6">169M</div>
<div class="t" style="left:255px;top:709px;color:#2bc6c6">5</div>
<div class="t" style="left:262px;top:709px;color:#dcdcdc">080 S</div>
<div class="t" style="left:311px;top:709px;color:#dcdcdc">0.6</div>
<div class="t" style="left:346px;top:709px;color:#dcdcdc">0.2 39:36.30</div>
<div class="t" style="left:458px;top:709px;color:#dcdcdc">/usr/sbin/</div>
<div class="t" style="left:528px;top:709px;color:#3ee8e8;font-weight:bold">netdata</div>
<div class="t" style="left:10px;top:724px;color:#dcdcdc">16045</div>
<div class="t" style="left:52px;top:724px;color:#828282;font-weight:bold">netdata</div>
<div class="t" style="left:129px;top:724px;color:#dcdcdc">39</div>
<div class="t" style="left:157px;top:724px;color:#00c800">19</div>
<div class="t" style="left:192px;top:724px;color:#dcdcdc">1</div>
<div class="t" style="left:213px;top:724px;color:#2bc6c6">3</div>
<div class="t" style="left:220px;top:724px;color:#dcdcdc">036</div>
<div class="t" style="left:255px;top:724px;color:#2bc6c6">2</div>
<div class="t" style="left:262px;top:724px;color:#dcdcdc">568 S</div>
<div class="t" style="left:311px;top:724px;color:#dcdcdc">0.0</div>
<div class="t" style="left:346px;top:724px;color:#dcdcdc">0.0</div>
<div class="t" style="left:381px;top:724px;color:#dcdcdc">0:08.82</div>
<div class="t" style="left:479px;top:724px;color:#3ee8e8;font-weight:bold">bash</div>
<div class="t" style="left:514px;top:724px;color:#dcdcdc">/usr/libexec/netdata/plugins.d/tc-qos-helper.sh 1</div>
<div class="t" style="left:10px;top:739px;color:#dcdcdc">12127</div>
<div class="t" style="left:52px;top:739px;color:#828282;font-weight:bold">netdata</div>
<div class="t" style="left:129px;top:739px;color:#dcdcdc">39</div>
<div class="t" style="left:157px;top:739px;color:#00c800">19</div>
<div class="t" style="left:192px;top:739px;color:#dcdcdc">7</div>
<div class="t" style="left:213px;top:739px;color:#2bc6c6">169M</div>
<div class="t" style="left:255px;top:739px;color:#2bc6c6">5</div>
<div class="t" style="left:262px;top:739px;color:#dcdcdc">080 S</div>
<div class="t" style="left:311px;top:739px;color:#dcdcdc">0.0</div>
<div class="t" style="left:346px;top:739px;color:#dcdcdc">0.2</div>
<div class="t" style="left:381px;top:739px;color:#dcdcdc">0:08.13</div>
<div class="t" style="left:479px;top:739px;color:#00c800">ACLK_Stats</div>
<div class="t" style="left:10px;top:754px;color:#dcdcdc">12122</div>
<div class="t" style="left:52px;top:754px;color:#828282;font-weight:bold">netdata</div>
<div class="t" style="left:129px;top:754px;color:#dcdcdc">39</div>
<div class="t" style="left:157px;top:754px;color:#00c800">19</div>
<div class="t" style="left:185px;top:754px;color:#dcdcdc">10</div>
<div class="t" style="left:213px;top:754px;color:#2bc6c6">169M</div>
<div class="t" style="left:255px;top:754px;color:#2bc6c6">5</div>
<div class="t" style="left:262px;top:754px;color:#dcdcdc">080 S</div>
<div class="t" style="left:311px;top:754px;color:#dcdcdc">0.0</div>
<div class="t" style="left:346px;top:754px;color:#dcdcdc">0.2</div>
<div class="t" style="left:381px;top:754px;color:#dcdcdc">0:00.36</div>
<div class="t" style="left:479px;top:754px;color:#00c800">METALOG</div>
<div class="t" style="left:10px;top:769px;color:#dcdcdc">12121</div>
<div class="t" style="left:52px;top:769px;color:#828282;font-weight:bold">netdata</div>
<div class="t" style="left:129px;top:769px;color:#dcdcdc">39</div>
<div class="t" style="left:157px;top:769px;color:#00c800">19</div>
<div class="t" style="left:185px;top:769px;color:#dcdcdc">16</div>
<div class="t" style="left:213px;top:769px;color:#2bc6c6">169M</div>
<div class="t" style="left:255px;top:769px;color:#2bc6c6">5</div>
<div class="t" style="left:262px;top:769px;color:#dcdcdc">080 S</div>
<div class="t" style="left:311px;top:769px;color:#dcdcdc">0.0</div>
<div class="t" style="left:346px;top:769px;color:#dcdcdc">0.2</div>
<div class="t" style="left:381px;top:769px;color:#dcdcdc">0:00.36</div>
<div class="t" style="left:479px;top:769px;color:#00c800">METALOG</div>
<div class="t" style="left:10px;top:784px;color:#dcdcdc">12120</div>
<div class="t" style="left:52px;top:784px;color:#828282;font-weight:bold">netdata</div>
<div class="t" style="left:129px;top:784px;color:#dcdcdc">39</div>
<div class="t" style="left:157px;top:784px;color:#00c800">19</div>
<div class="t" style="left:185px;top:784px;color:#dcdcdc">20</div>
<div class="t" style="left:213px;top:784px;color:#2bc6c6">169M</div>
<div class="t" style="left:255px;top:784px;color:#2bc6c6">5</div>
<div class="t" style="left:262px;top:784px;color:#dcdcdc">080 S</div>
<div class="t" style="left:311px;top:784px;color:#dcdcdc">0.0</div>
<div class="t" style="left:346px;top:784px;color:#dcdcdc">0.2</div>
<div class="t" style="left:381px;top:784px;color:#dcdcdc">0:00.36</div>
<div class="t" style="left:479px;top:784px;color:#00c800">METALOG</div>
<div class="t" style="left:10px;top:799px;color:#dcdcdc">12119</div>
<div class="t" style="left:52px;top:799px;color:#828282;font-weight:bold">netdata</div>
<div class="t" style="left:129px;top:799px;color:#dcdcdc">39</div>
<div class="t" style="left:157px;top:799px;color:#00c800">19</div>
<div class="t" style="left:192px;top:799px;color:#dcdcdc">4</div>
<div class="t" style="left:213px;top:799px;color:#2bc6c6">169M</div>
<div class="t" style="left:255px;top:799px;color:#2bc6c6">5</div>
<div class="t" style="left:262px;top:799px;color:#dcdcdc">080 S</div>
<div class="t" style="left:311px;top:799px;color:#dcdcdc">0.0</div>
<div class="t" style="left:346px;top:799px;color:#dcdcdc">0.2</div>
<div class="t" style="left:381px;top:799px;color:#dcdcdc">0:00.36</div>
<div class="t" style="left:479px;top:799px;color:#00c800">METALOG</div>
<div class="t" style="left:10px;top:814px;color:#dcdcdc">11901</div>
<div class="t" style="left:52px;top:814px;color:#828282;font-weight:bold">netdata</div>
<div class="t" style="left:129px;top:814px;color:#dcdcdc">39</div>
<div class="t" style="left:157px;top:814px;color:#00c800">19</div>
<div class="t" style="left:185px;top:814px;color:#dcdcdc">18</div>
<div class="t" style="left:213px;top:814px;color:#2bc6c6">9</div>
<div class="t" style="left:220px;top:814px;color:#dcdcdc">348</div>
<div class="t" style="left:255px;top:814px;color:#2bc6c6">3</div>
<div class="t" style="left:262px;top:814px;color:#dcdcdc">564</div>
<div class="t" style="left:290px;top:814px;color:#00c800">R</div>
<div class="t" style="left:311px;top:814px;color:#dcdcdc">3.1</div>
<div class="t" style="left:346px;top:814px;color:#dcdcdc">0.0</div>
<div class="t" style="left:381px;top:814px;color:#ff2a2a;font-weight:bold">1h</div>
<div class="t" style="left:395px;top:814px;color:#dcdcdc">27:45</div>
<div class="t" style="left:479px;top:814px;color:#dcdcdc">/usr/libexec/netdata/plugins.d/</div>
<div class="t" style="left:696px;top:814px;color:#3ee8e8;font-weight:bold">apps.plugin</div>
<div class="t" style="left:780px;top:814px;color:#dcdcdc">1</div>
<div class="t" style="left:10px;top:829px;color:#dcdcdc">F1</div>
<div class="t" style="left:24px;top:829px;color:#000">Help</div>
<div class="t" style="left:66px;top:829px;color:#dcdcdc">F2</div>
<div class="t" style="left:80px;top:829px;color:#000">Setup</div>
<div class="t" style="left:122px;top:829px;color:#dcdcdc">F3</div>
<div class="t" style="left:136px;top:829px;color:#000">Search</div>
<div class="t" style="left:178px;top:829px;color:#dcdcdc">F4</div>
<div class="t" style="left:192px;top:829px;color:#000">Filter</div>
<div class="t" style="left:234px;top:829px;color:#dcdcdc">F5</div>
<div class="t" style="left:248px;top:829px;color:#000">Sorted</div>
<div class="t" style="left:290px;top:829px;color:#dcdcdc">F6</div>
<div class="t" style="left:304px;top:829px;color:#000">Collap</div>
<div class="t" style="left:346px;top:829px;color:#dcdcdc">F7</div>
<div class="t" style="left:360px;top:829px;color:#000">Nice -</div>
<div class="t" style="left:402px;top:829px;color:#dcdcdc">F8</div>
<div class="t" style="left:416px;top:829px;color:#000">Nice +</div>
<div class="t" style="left:458px;top:829px;color:#dcdcdc">F9</div>
<div class="t" style="left:472px;top:829px;color:#000">Kill</div>
<div class="t" style="left:514px;top:829px;color:#dcdcdc">F10</div>
<div class="t" style="left:535px;top:829px;color:#000">Quit</div>
</div></body></html>
